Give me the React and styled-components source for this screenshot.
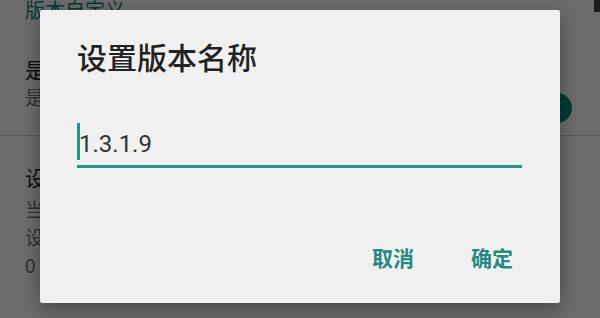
import styled, { createGlobalStyle } from "styled-components";

const GlobalStyle = createGlobalStyle`
  html, body {
    margin: 0;
    padding: 0;
    background: #ffffff;
  }
  body {
    font-family: "Noto Sans CJK SC", "Noto Sans", sans-serif;
  }
`;

const teal = "#00897b";

const Screen = styled.div`
  position: relative;
  width: 600px;
  height: 318px;
  overflow: hidden;
  background: #fafafa;
`;

const Settings = styled.div`
  display: flex;
  flex-direction: column;
`;

const SectionHeader = styled.div`
  padding-left: 25px;
  margin-bottom: 8px;
  font-size: 20px;
  line-height: 20px;
  color: ${teal};
`;

const Row = styled.div`
  position: relative;
  display: flex;
  flex-direction: column;
  padding: 27px 25px 24px;
  border-bottom: ${(p) => (p.$divider ? "1px solid #d6d6d6" : "none")};
`;

const RowTitle = styled.div`
  font-size: 21px;
  line-height: 28px;
  color: #212121;
`;

const RowSummary = styled.div`
  margin-top: ${(p) => p.$gap || 0}px;
  font-size: 19px;
  line-height: 28px;
  color: #757575;
  white-space: pre-line;
`;

const SwitchThumb = styled.span`
  position: absolute;
  right: 28px;
  top: 65px;
  width: 30px;
  height: 30px;
  border-radius: 50%;
  background: ${teal};
`;

const ScrollBar = styled.span`
  position: absolute;
  right: 0;
  top: 0;
  width: 6px;
  height: 12px;
  background: #444;
`;

const Scrim = styled.div`
  position: absolute;
  inset: 0;
  background: rgba(0, 0, 0, 0.57);
`;

const Dialog = styled.div`
  position: absolute;
  left: 40px;
  top: 10px;
  width: 520px;
  height: 293px;
  box-sizing: border-box;
  display: flex;
  flex-direction: column;
  padding: 28px 38px 32px 37px;
  background: #f0f0f0;
  border-radius: 2px;
  box-shadow: 0 6px 20px rgba(0, 0, 0, 0.35);
`;

const Title = styled.h2`
  margin: 0;
  font-size: 30px;
  line-height: 36px;
  font-weight: 500;
  color: #222;
`;

const Field = styled.div`
  display: flex;
  align-items: flex-start;
  margin-top: 49px;
  padding-bottom: 5px;
  border-bottom: 3px solid #26938a;
`;

const Caret = styled.span`
  width: 3px;
  height: 37px;
  background: #26938a;
`;

const Value = styled.span`
  padding-top: 6px;
  margin-left: -1px;
  font-family: Roboto, "Noto Sans", sans-serif;
  font-size: 24px;
  line-height: 31px;
  color: #333;
`;

const Actions = styled.div`
  display: flex;
  justify-content: flex-end;
  gap: 57px;
  margin-top: auto;
  padding-right: 9px;
`;

const ActionButton = styled.button`
  padding: 0;
  border: none;
  background: transparent;
  font-family: "Noto Sans CJK SC", sans-serif;
  font-size: 21px;
  line-height: 28px;
  font-weight: 700;
  color: #26897f;
  cursor: pointer;
`;

export default function App() {
  return (
    <>
      <GlobalStyle />
      <Screen>
        <Settings>
          <SectionHeader>版本自定义</SectionHeader>
          <Row $divider>
            <RowTitle>是否自定义版本</RowTitle>
            <RowSummary>是否使用自定义的版本名称和版本号</RowSummary>
            <SwitchThumb />
          </Row>
          <Row>
            <RowTitle>设置版本名称</RowTitle>
            <RowSummary $gap={4}>
              {"当前版本名称：1.3.1.9\n设置后将替换原有的版本名称\n0"}
            </RowSummary>
          </Row>
        </Settings>
        <ScrollBar />
        <Scrim />
        <Dialog>
          <Title>设置版本名称</Title>
          <Field>
            <Caret />
            <Value>1.3.1.9</Value>
          </Field>
          <Actions>
            <ActionButton>取消</ActionButton>
            <ActionButton>确定</ActionButton>
          </Actions>
        </Dialog>
      </Screen>
    </>
  );
}
